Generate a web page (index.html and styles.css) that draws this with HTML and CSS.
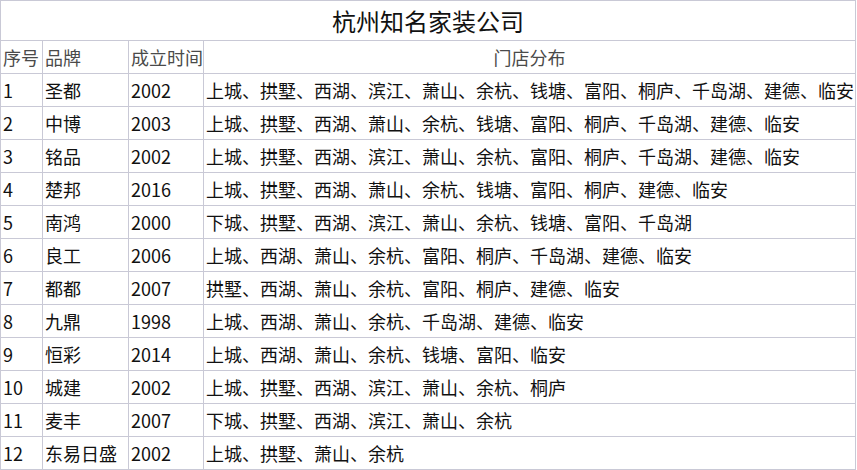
FILE: index.html
```html
<!DOCTYPE html>
<html lang="zh-CN">
<head>
<meta charset="utf-8">
<title>杭州知名家装公司</title>
<link rel="stylesheet" href="styles.css">
</head>
<body>
<div class="sheet">
  <div class="cell title">杭州知名家装公司</div>
  <div class="cell head">序号</div>
  <div class="cell head">品牌</div>
  <div class="cell head">成立时间</div>
  <div class="cell head center">门店分布</div>

  <div class="cell">1</div><div class="cell">圣都</div><div class="cell">2002</div><div class="cell">上城、拱墅、西湖、滨江、萧山、余杭、钱塘、富阳、桐庐、千岛湖、建德、临安</div>
  <div class="cell">2</div><div class="cell">中博</div><div class="cell">2003</div><div class="cell">上城、拱墅、西湖、萧山、余杭、钱塘、富阳、桐庐、千岛湖、建德、临安</div>
  <div class="cell">3</div><div class="cell">铭品</div><div class="cell">2002</div><div class="cell">上城、拱墅、西湖、滨江、萧山、余杭、富阳、桐庐、千岛湖、建德、临安</div>
  <div class="cell">4</div><div class="cell">楚邦</div><div class="cell">2016</div><div class="cell">上城、拱墅、西湖、萧山、余杭、钱塘、富阳、桐庐、建德、临安</div>
  <div class="cell">5</div><div class="cell">南鸿</div><div class="cell">2000</div><div class="cell">下城、拱墅、西湖、滨江、萧山、余杭、钱塘、富阳、千岛湖</div>
  <div class="cell">6</div><div class="cell">良工</div><div class="cell">2006</div><div class="cell">上城、西湖、萧山、余杭、富阳、桐庐、千岛湖、建德、临安</div>
  <div class="cell">7</div><div class="cell">都都</div><div class="cell">2007</div><div class="cell">拱墅、西湖、萧山、余杭、富阳、桐庐、建德、临安</div>
  <div class="cell">8</div><div class="cell">九鼎</div><div class="cell">1998</div><div class="cell">上城、西湖、萧山、余杭、千岛湖、建德、临安</div>
  <div class="cell">9</div><div class="cell">恒彩</div><div class="cell">2014</div><div class="cell">上城、西湖、萧山、余杭、钱塘、富阳、临安</div>
  <div class="cell">10</div><div class="cell">城建</div><div class="cell">2002</div><div class="cell">上城、拱墅、西湖、滨江、萧山、余杭、桐庐</div>
  <div class="cell">11</div><div class="cell">麦丰</div><div class="cell">2007</div><div class="cell">下城、拱墅、西湖、滨江、萧山、余杭</div>
  <div class="cell">12</div><div class="cell">东易日盛</div><div class="cell">2002</div><div class="cell">上城、拱墅、萧山、余杭</div>
</div>
</body>
</html>
```

FILE: styles.css
```css
html, body {
  margin: 0;
  padding: 0;
  background: #ffffff;
}

.sheet {
  display: grid;
  grid-template-columns: 42px 86px 75px 652px;
  grid-template-rows: 40px repeat(13, 33px);
  width: 856px;
  box-sizing: border-box;
  border-top: 1px solid #c9c9d6;
  border-left: 1px solid #c9c9d6;
  font-family: "Noto Sans CJK SC", "Microsoft YaHei", sans-serif;
  font-size: 18px;
  color: #111111;
}

.cell {
  box-sizing: border-box;
  border-right: 1px solid #c9c9d6;
  border-bottom: 1px solid #c9c9d6;
  padding: 0 0 0 2px;
  display: flex;
  align-items: center;
  white-space: nowrap;
  overflow: hidden;
  line-height: 1;
}

.title {
  grid-column: 1 / -1;
  justify-content: center;
  font-size: 24px;
  color: #111111;
  padding: 0;
}

.head {
  color: #4a4a4a;
}

.center {
  justify-content: center;
  padding: 0;
}
```
